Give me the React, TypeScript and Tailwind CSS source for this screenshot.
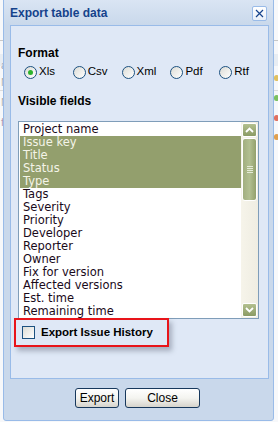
import React from "react";

const fields = [
  "Project name",
  "Issue key",
  "Title",
  "Status",
  "Type",
  "Tags",
  "Severity",
  "Priority",
  "Developer",
  "Reporter",
  "Owner",
  "Fix for version",
  "Affected versions",
  "Est. time",
  "Remaining time",
];
const selected = ["Issue key", "Title", "Status", "Type"];
const formats = ["Xls", "Csv", "Xml", "Pdf", "Rtf"];

const Radio = ({ checked }: { checked?: boolean }) => (
  <span className="flex h-[13px] w-[13px] items-center justify-center rounded-full border border-[#1c5180] bg-gradient-to-br from-[#dcdcd6] to-white">
    {checked && <span className="h-[5px] w-[5px] rounded-full bg-[#2cb32c]" />}
  </span>
);

const ScrollBtn = ({ up }: { up?: boolean }) => (
  <div className="flex h-[14px] w-[15px] items-center justify-center rounded-[2px] border border-white bg-gradient-to-b from-[#b3c08f] to-[#8b9b63]">
    <svg width="9" height="6" viewBox="0 0 9 6">
      <path
        d={up ? "M1 5 L4.5 1.5 L8 5" : "M1 1 L4.5 4.5 L8 1"}
        stroke="white"
        strokeWidth="1.8"
        fill="none"
      />
    </svg>
  </div>
);

const App = () => {
  return (
    <div className="relative h-[422px] w-[278px] overflow-hidden bg-[#f7f8fa] font-['Liberation_Sans',sans-serif]">
      {/* page behind the window */}
      <div className="absolute left-0 top-[40px] h-px w-[278px] bg-[#c8c8c8]" />
      <div className="absolute left-0 top-[54px] h-[12px] w-[278px] bg-[#e8edf3]" />
      <div className="absolute left-0 top-[90px] h-px w-[278px] bg-[#dcdcdc]" />
      <span className="absolute left-[1px] top-[57px] text-[11px] text-[#9aa6b8]">at</span>
      <span className="absolute left-[1px] top-[74px] text-[11px] text-[#b0b0b0]">N</span>
      <span className="absolute left-[1px] top-[94px] text-[11px] text-[#b0b0b0]">N</span>
      <span className="absolute left-[1px] top-[114px] text-[11px] text-[#b49ab0]">fc</span>
      <span className="absolute left-[274px] top-[75px] h-[6px] w-[5px] rounded-full bg-[#e0c060]" />
      <span className="absolute left-[274px] top-[95px] h-[6px] w-[5px] rounded-full bg-[#7cc060]" />
      <span className="absolute left-[274px] top-[115px] h-[6px] w-[5px] rounded-full bg-[#e07060]" />
      <span className="absolute left-[274px] top-[134px] h-[6px] w-[5px] rounded-full bg-[#e0a050]" />

      {/* window */}
      <div className="absolute left-[3px] top-[-3px] flex h-[424px] w-[271px] flex-col rounded-[3px] border border-[#99bbe8] bg-[#c9d8eb]">
        <div className="flex h-[27px] items-center justify-between bg-gradient-to-b from-[#dbe6f4] to-[#c9d8eb] pl-[6px] pr-[6px] pt-[3px]">
          <span className="text-[12px] font-bold text-[#15428b]">Export table data</span>
          <span className="flex h-[15px] w-[15px] items-center justify-center rounded-[2px] border border-[#99bbe8] bg-gradient-to-b from-white to-[#e9f0f9]">
            <svg width="9" height="9" viewBox="0 0 9 9">
              <path d="M1 1 L8 8 M8 1 L1 8" stroke="#15428b" strokeWidth="1.2" />
            </svg>
          </span>
        </div>

        <div className="ml-[6px] flex h-[354px] w-[259px] flex-col border border-[#99bbe8] bg-[#dfe8f6] pl-[7px] pt-[20px]">
          <div className="text-[12px] font-bold leading-[14px] text-black">Format</div>
          <div className="mt-[4px] flex h-[16px] items-center pl-[6px] text-[11.5px] text-black">
            {formats.map((f, i) => (
              <label key={f} className="flex w-[49px] items-center gap-[2px]">
                <Radio checked={i === 0} />
                <span>{f}</span>
              </label>
            ))}
          </div>
          <div className="mt-[14px] text-[12px] font-bold leading-[14px] text-black">Visible fields</div>

          <div className="mt-[13px] flex h-[198px] w-[241px] border border-[#7f9db9] bg-white">
            <div className="flex-1 pl-[1px] pt-px font-['DejaVu_Sans',sans-serif] text-[11.5px] leading-[13px] text-[#1a0a1a]">
              {fields.map((f) => {
                const on = selected.includes(f);
                return (
                  <div
                    key={f}
                    className={
                      on ? "h-[13px] bg-[#939f6d] pl-[3px] text-[#f4f4e8]" : "h-[13px] pl-[3px]"
                    }
                  >
                    {f}
                  </div>
                );
              })}
            </div>
            <div className="flex w-[17px] flex-col items-center bg-gradient-to-r from-[#f6f4ea] to-[#efede2] py-px">
              <ScrollBtn up />
              <div className="mt-[1px] flex h-[63px] w-[15px] items-center justify-center rounded-[3px] border border-white bg-gradient-to-r from-[#a2af80] via-[#b2bf91] to-[#93a16c]">
                <div className="flex flex-col gap-[1px]">
                  <span className="h-px w-[6px] bg-[#e4ead6]" />
                  <span className="h-px w-[6px] bg-[#e4ead6]" />
                  <span className="h-px w-[6px] bg-[#e4ead6]" />
                  <span className="h-px w-[6px] bg-[#e4ead6]" />
                </div>
              </div>
              <div className="flex-1" />
              <ScrollBtn />
            </div>
          </div>

          <div className="ml-[-4px] mt-[-1px] flex h-[29px] w-[155px] items-center gap-[6px] border-2 border-[#e8141a] pl-[6px] shadow-[3px_4px_5px_rgba(60,70,90,0.35)]">
            <span className="h-[13px] w-[13px] border border-[#1c5180] bg-gradient-to-br from-[#dcdcd6] to-white" />
            <span className="text-[11.5px] font-bold text-black">Export Issue History</span>
          </div>
        </div>

        <div className="mt-[9px] flex justify-center gap-[6px] pr-[2px]">
          <button className="h-[20px] w-[44px] rounded-[3px] border border-[#17385c] bg-gradient-to-b from-white via-[#f4f4f0] to-[#d6d4cc] text-[12px] text-black">
            Export
          </button>
          <button className="h-[20px] w-[75px] rounded-[3px] border border-[#17385c] bg-gradient-to-b from-white via-[#f4f4f0] to-[#d6d4cc] text-[12px] text-black">
            Close
          </button>
        </div>
      </div>
    </div>
  );
};

export default App;
